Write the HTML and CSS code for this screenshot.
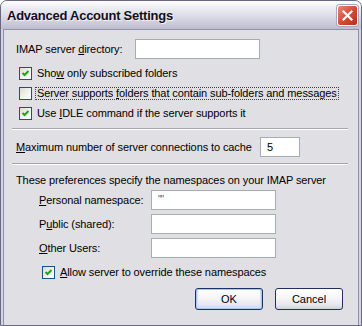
FILE: index.html
```html
<!DOCTYPE html>
<html lang="en">
<head>
    <meta charset="UTF-8">
    <title>Advanced Account Settings</title>
    <link rel="stylesheet" href="styles.css">
</head>
<body>
    <div class="window">
        <div class="titlebar">
            <span class="title">Advanced Account Settings</span>
            <div class="close-btn">
                <svg width="13" height="13" viewBox="0 0 13 13">
                    <path d="M2.5 2.5 L10.5 10.5 M10.5 2.5 L2.5 10.5" stroke="#ffffff" stroke-width="2.2" stroke-linecap="square"/>
                </svg>
            </div>
        </div>
        <div class="frame">
            <div class="client">
                <div class="field-row">
                    <label class="field-label dir-label">IMAP server <u>d</u>irectory:</label>
                    <div class="textbox wide"></div>
                </div>

                <div class="check-row">
                    <span class="checkbox checked">
                        <svg width="11" height="11" viewBox="0 0 11 11"><path d="M2.5 5 L4.5 7 L8.5 3" fill="none" stroke="#21a121" stroke-width="2"/></svg>
                    </span>
                    <span class="check-label">Sho<u>w</u> only subscribed folders</span>
                </div>
                <div class="check-row">
                    <span class="checkbox"></span>
                    <span class="check-label focused">Server supports <u>f</u>olders that contain sub-folders and messages</span>
                </div>
                <div class="check-row">
                    <span class="checkbox checked">
                        <svg width="11" height="11" viewBox="0 0 11 11"><path d="M2.5 5 L4.5 7 L8.5 3" fill="none" stroke="#21a121" stroke-width="2"/></svg>
                    </span>
                    <span class="check-label">Use <u>I</u>DLE command if the server supports it</span>
                </div>

                <div class="separator first"></div>

                <div class="field-row">
                    <label class="field-label max-label"><u>M</u>aximum number of server connections to cache</label>
                    <div class="textbox small">5</div>
                </div>

                <div class="separator second"></div>

                <p class="intro">These preferences specify the namespaces on your IMAP server</p>

                <div class="ns-group">
                    <div class="field-row">
                        <label class="field-label ns-label"><u>P</u>ersonal namespace:</label>
                        <div class="textbox wide quotes">""</div>
                    </div>
                    <div class="field-row">
                        <label class="field-label ns-label">P<u>u</u>blic (shared):</label>
                        <div class="textbox wide"></div>
                    </div>
                    <div class="field-row">
                        <label class="field-label ns-label"><u>O</u>ther Users:</label>
                        <div class="textbox wide"></div>
                    </div>
                </div>

                <div class="check-row indent">
                    <span class="checkbox checked">
                        <svg width="11" height="11" viewBox="0 0 11 11"><path d="M2.5 5 L4.5 7 L8.5 3" fill="none" stroke="#21a121" stroke-width="2"/></svg>
                    </span>
                    <span class="check-label"><u>A</u>llow server to override these namespaces</span>
                </div>

                <div class="buttons">
                    <button class="btn default">OK</button>
                    <button class="btn">Cancel</button>
                </div>
            </div>
        </div>
    </div>
</body>
</html>
```

FILE: styles.css
```css
body {
    margin: 0;
    font-family: 'Liberation Sans', Arial, sans-serif;
    font-size: 11px;
    letter-spacing: -0.1px;
    color: #000000;
    background-color: #ffffff;
}
.window {
    width: 362px;
    height: 326px;
    box-sizing: border-box;
    border: 1px solid #686882;
    border-radius: 7px 7px 0 0;
    background-color: #d4d4e0;
    overflow: hidden;
}
.titlebar {
    height: 28px;
    display: flex;
    align-items: center;
    justify-content: space-between;
    padding: 0 3px 0 6px;
    background: linear-gradient(#ffffff 0%, #ececf2 25%, #d8d8e4 60%, #bdbdcf 100%);
}
.title {
    font-size: 13px;
    font-weight: bold;
    letter-spacing: -0.25px;
    color: #101020;
    text-shadow: 1px 1px 0 #f4f4f8;
    padding-top: 1px;
}
.close-btn {
    width: 19px;
    height: 19px;
    margin-top: 1px;
    border: 1px solid #ffffff;
    border-radius: 3px;
    background: linear-gradient(135deg, #e88a78 0%, #d44c36 50%, #b7301c 100%);
    box-shadow: 0 0 0 1px #a8a8bc;
    display: flex;
    align-items: center;
    justify-content: center;
}
.frame {
    padding: 0 2px 2px;
}
.client {
    height: 292px;
    border: 1px solid #9090a8;
    background-color: #e0dfe3;
    padding: 9px 10px 0 12px;
}
.field-row {
    display: flex;
    align-items: center;
    height: 20px;
}
.field-label {
    white-space: nowrap;
}
.dir-label {
    width: 119px;
}
.max-label {
    width: 244px;
}
.ns-label {
    width: 112px;
    padding-left: 23px;
}
.textbox {
    height: 20px;
    box-sizing: border-box;
    border: 1px solid #a5acb2;
    background-color: #ffffff;
    padding: 0 6px;
    line-height: 18px;
}
.textbox.wide {
    width: 125px;
}
.textbox.small {
    width: 40px;
}
.quotes {
    color: #3a6ea5;
    font-size: 10px;
    letter-spacing: -1px;
}
.check-row {
    display: flex;
    align-items: center;
    height: 13px;
    margin-top: 8px;
    padding-left: 3px;
}
.check-row + .check-row {
    margin-top: 7px;
}
.check-row.indent {
    padding-left: 26px;
    margin-top: 8px;
}
.checkbox {
    width: 13px;
    height: 13px;
    box-sizing: border-box;
    border: 1px solid #1c5180;
    background: linear-gradient(135deg, #dcdcd7 0%, #f4f4f0 60%, #ffffff 100%);
    display: flex;
    align-items: center;
    justify-content: center;
    flex-shrink: 0;
}
.check-label {
    margin-left: 3px;
    padding: 0 1px;
    border: 1px dotted transparent;
    line-height: 11px;
    white-space: nowrap;
}
.check-label.focused {
    border-color: #404040;
}
.separator {
    margin-left: -4px;
    border-top: 1px solid #a6a6ae;
    border-bottom: 1px solid #ffffff;
    height: 0;
}
.separator.first {
    margin-top: 8px;
    margin-bottom: 7px;
}
.separator.second {
    margin-top: 6px;
}
.intro {
    margin: 8px 0 0;
    line-height: 14px;
    white-space: nowrap;
}
.ns-group {
    display: flex;
    flex-direction: column;
    gap: 4px;
    margin-top: 3px;
}
.buttons {
    display: flex;
    justify-content: flex-end;
    gap: 12px;
    margin-top: 9px;
    padding-right: 5px;
}
.btn {
    width: 68px;
    height: 22px;
    padding: 0;
    font-family: 'Liberation Sans', Arial, sans-serif;
    font-size: 11px;
    color: #000000;
    border: 1px solid #1f2f5f;
    border-radius: 3px;
    background: linear-gradient(#ffffff 0%, #f6f6f8 45%, #e6e6ec 80%, #d2d2dc 100%);
}
.btn.default {
    box-shadow: inset 0 0 0 1px #a8c8f0, inset 0 -1px 0 2px #cfe0f8;
}
```
